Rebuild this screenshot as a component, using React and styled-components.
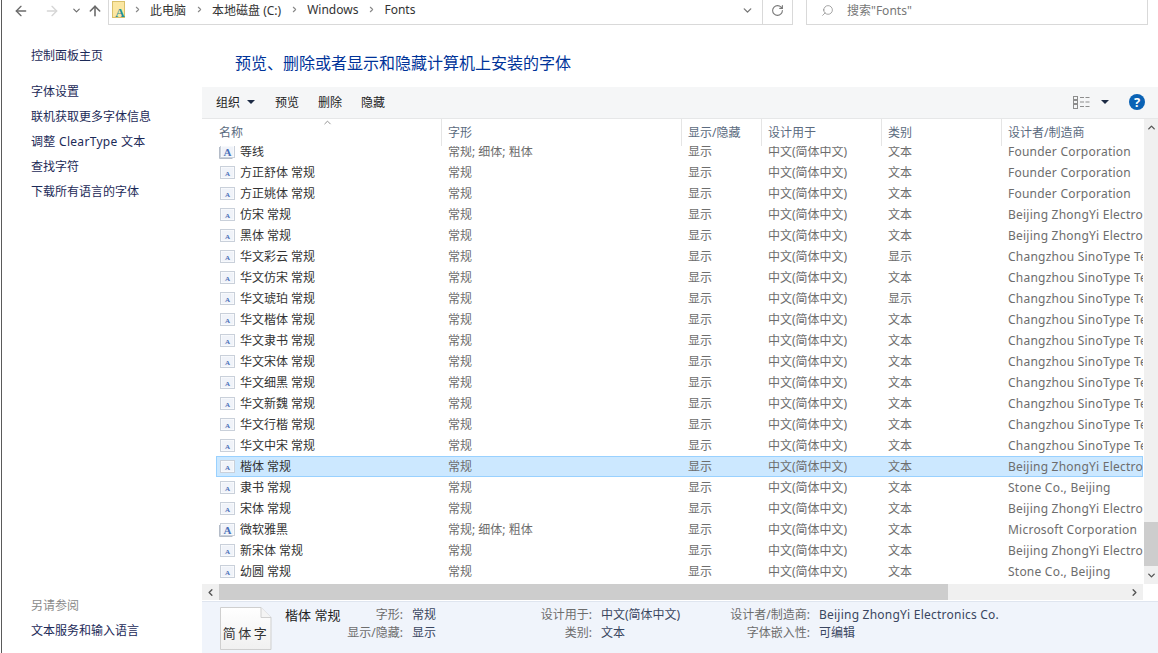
import { ArrowLeft, ArrowRight, ArrowUp, ChevronDown, ChevronLeft, ChevronRight, ChevronUp, RotateCw, Search } from "lucide-react";
import { createGlobalStyle, styled } from "styled-components";

// makers as far as the narrow last column shows them
const BEIJING = "Beijing ZhongYi Electro";
const FOUNDER = "Founder Corporation";
const SINOTYPE = "Changzhou SinoType Te";
const STONE = "Stone Co., Beijing";

const fonts = [
  { name: "等线", style: "常规; 细体; 粗体", maker: FOUNDER, family: true },
  { name: "方正舒体 常规", maker: FOUNDER },
  { name: "方正姚体 常规", maker: FOUNDER },
  { name: "仿宋 常规", maker: BEIJING },
  { name: "黑体 常规", maker: BEIJING },
  { name: "华文彩云 常规", maker: SINOTYPE, kind: "显示" },
  { name: "华文仿宋 常规", maker: SINOTYPE },
  { name: "华文琥珀 常规", maker: SINOTYPE, kind: "显示" },
  { name: "华文楷体 常规", maker: SINOTYPE },
  { name: "华文隶书 常规", maker: SINOTYPE },
  { name: "华文宋体 常规", maker: SINOTYPE },
  { name: "华文细黑 常规", maker: SINOTYPE },
  { name: "华文新魏 常规", maker: SINOTYPE },
  { name: "华文行楷 常规", maker: SINOTYPE },
  { name: "华文中宋 常规", maker: SINOTYPE },
  { name: "楷体 常规", maker: BEIJING, selected: true },
  { name: "隶书 常规", maker: STONE },
  { name: "宋体 常规", maker: BEIJING },
  { name: "微软雅黑", style: "常规; 细体; 粗体", maker: "Microsoft Corporation", family: true },
  { name: "新宋体 常规", maker: BEIJING },
  { name: "幼圆 常规", maker: STONE },
];

const columns = [
  { title: "名称", width: 226 },
  { title: "字形", width: 240 },
  { title: "显示/隐藏", width: 80 },
  { title: "设计用于", width: 120 },
  { title: "类别", width: 120 },
  { title: "设计者/制造商", width: 141 },
];

const GlobalStyle = createGlobalStyle`
  html, body {
    margin: 0;
    padding: 0;
    background: #fff;
  }
  body {
    font-family: "Noto Sans", "Noto Sans CJK SC", sans-serif;
    font-size: 12px;
  }
`;

const Window = styled.div`
  width: 1157px;
  height: 653px;
  margin-left: 1px;
  border-left: 1px solid #5a5a5a;
  box-sizing: border-box;
  display: flex;
  flex-direction: column;
  overflow: hidden;
`;

const AddressRow = styled.div`
  height: 26px;
  flex: none;
  display: flex;
  align-items: flex-start;
`;

const NavButtons = styled.div`
  width: 106px;
  height: 21px;
  display: flex;
  align-items: center;
  color: #5f5f5f;
`;

const NavIcon = styled.span`
  display: flex;
  margin-left: ${(p) => p.$left}px;
  color: ${(p) => (p.$off ? "#d5d5d5" : "#6b6b6b")};
`;

const AddressBox = styled.div`
  width: 685px;
  height: 25px;
  box-sizing: border-box;
  border: 1px solid #d9d9d9;
  border-top: none;
  display: flex;
  align-items: center;
`;

const Crumbs = styled.div`
  flex: 1;
  display: flex;
  align-items: center;
  gap: 10.5px;
  padding: 0 0 5px 3px;
  color: #333;
`;

const FolderMark = styled.span`
  display: flex;
  margin-right: -2px;
`;

const CrumbChevron = styled.span`
  display: flex;
  color: #888;
  margin: 0 -2px;
`;

const AddressEnd = styled.span`
  width: 30px;
  height: 100%;
  display: flex;
  align-items: center;
  justify-content: center;
  padding-bottom: 4px;
  box-sizing: border-box;
  color: #777;
  border-left: ${(p) => (p.$divider ? "1px solid #d9d9d9" : "none")};
`;

const SearchBox = styled.div`
  width: 342px;
  height: 25px;
  margin-left: 13px;
  box-sizing: border-box;
  border: 1px solid #d9d9d9;
  border-top: none;
  display: flex;
  align-items: center;
  gap: 13px;
  padding: 0 0 4px 14px;
  color: #777;
  svg {
    transform: scaleX(-1);
  }
`;

const Body = styled.div`
  flex: 1;
  min-height: 0;
  display: flex;
`;

const Sidebar = styled.nav`
  width: 200px;
  flex: none;
  display: flex;
  flex-direction: column;
  padding: 21px 0 6px 29px;
  box-sizing: border-box;
`;

const SideLink = styled.div`
  height: 25px;
  line-height: 18px;
  color: #1c2a58;
  margin-bottom: ${(p) => p.$gap || 0}px;
  letter-spacing: ${(p) => (p.$spaced ? "0.3px" : "0")};
`;

const SideHeading = styled.div`
  height: 25px;
  line-height: 18px;
  margin-top: auto;
  color: #8a8a8a;
`;

const Content = styled.main`
  flex: 1;
  min-width: 0;
  display: flex;
  flex-direction: column;
`;

const Title = styled.h1`
  height: 61px;
  flex: none;
  margin: 0;
  padding: 25px 0 0 33px;
  box-sizing: border-box;
  font-size: 16px;
  font-weight: 400;
  line-height: 24px;
  color: #003399;
`;

const Toolbar = styled.div`
  height: 32px;
  flex: none;
  box-sizing: border-box;
  background: #f5f6f7;
  border-bottom: 1px solid #e6e7e8;
  display: flex;
  align-items: center;
  padding: 0 13px 1px 14px;
  color: #222;
`;

const ToolButton = styled.span`
  display: flex;
  align-items: center;
  margin-right: ${(p) => p.$gap}px;
`;

const Caret = styled.span`
  width: 0;
  height: 0;
  margin-left: ${(p) => p.$left}px;
  border-left: 4px solid transparent;
  border-right: 4px solid transparent;
  border-top: 4px solid #1d2b45;
`;

const ToolbarEnd = styled.div`
  margin-left: auto;
  display: flex;
  align-items: center;
`;

const HelpBadge = styled.span`
  width: 16px;
  height: 16px;
  margin-left: 20px;
  border-radius: 50%;
  background: #0a62b5;
  color: #fff;
  font-size: 13px;
  font-weight: 700;
  line-height: 16px;
  text-align: center;
`;

const ListArea = styled.div`
  flex: 1;
  min-height: 0;
  display: flex;
`;

const ListColumn = styled.div`
  width: 941px;
  flex: none;
  display: flex;
  flex-direction: column;
`;

const List = styled.div`
  flex: 1;
  min-height: 0;
  padding-left: 14px;
  overflow: hidden;
`;

const Header = styled.div`
  height: 27px;
  display: flex;
  position: relative;
  z-index: 1;
  background: #fff;
  margin-bottom: -5px;
  color: #5b6b80;
`;

const HeaderCell = styled.div`
  width: ${(p) => p.$width}px;
  flex: none;
  box-sizing: border-box;
  padding: 5px 0 0 ${(p) => (p.$first ? 3 : 6)}px;
  line-height: 18px;
  border-right: ${(p) => (p.$last ? "none" : "1px solid #e5e5e5")};
`;

const SortMark = styled.span`
  position: absolute;
  left: 106px;
  top: -2px;
  display: flex;
  color: #8a8a8a;
`;

const Row = styled.div`
  height: 21px;
  display: flex;
  align-items: center;
  box-sizing: border-box;
  color: #6d6d6d;
  background: ${(p) => (p.$selected ? "#cce8ff" : "transparent")};
  box-shadow: ${(p) => (p.$selected ? "inset 0 0 0 1px #99d1ff" : "none")};
`;

const Cell = styled.div`
  width: ${(p) => p.$width}px;
  flex: none;
  box-sizing: border-box;
  padding-left: 7px;
  white-space: nowrap;
  overflow: hidden;
  line-height: 18px;
  letter-spacing: ${(p) => (p.$latin ? "0.23px" : "0")};
`;

const NameCell = styled(Cell)`
  display: flex;
  align-items: center;
  gap: 4px;
  padding-left: 3px;
  color: #333;
`;

const HScroll = styled.div`
  height: 16px;
  margin-bottom: 1px;
  flex: none;
  background: #f0f0f0;
  display: flex;
  align-items: center;
  color: #555;
`;

const ScrollEnd = styled.span`
  width: 17px;
  flex: none;
  display: flex;
  justify-content: center;
  margin-left: ${(p) => (p.$push ? "auto" : 0)};
`;

const HThumb = styled.div`
  width: 729px;
  height: 100%;
  background: #cdcdcd;
`;

const VScroll = styled.div`
  width: 14px;
  flex: none;
  margin-left: 1px;
  margin-bottom: 17px;
  background: #f0f0f0;
  display: flex;
  flex-direction: column;
  align-items: center;
  color: #555;
  position: relative;
`;

const VArrow = styled.span`
  height: 17px;
  display: flex;
  align-items: center;
  margin-top: ${(p) => (p.$push ? "auto" : 0)};
`;

const VThumb = styled.div`
  position: absolute;
  left: 0;
  right: 0;
  top: 403px;
  height: 44px;
  background: #cdcdcd;
`;

const Details = styled.footer`
  height: 52px;
  flex: none;
  border-top: 1px solid #dfe5ef;
  box-sizing: border-box;
  background: #f0f4fb;
  display: flex;
  align-items: flex-start;
  padding: 4px 0 0 18px;
  color: #6d6d6d;
`;

const Preview = styled.div`
  width: 52px;
  height: 43px;
  flex: none;
  position: relative;
  margin: 1px 13px 0 0;
`;

const PreviewText = styled.span`
  position: absolute;
  left: 0;
  right: 0;
  top: 17px;
  text-align: center;
  font-size: 13px;
  line-height: 18px;
  letter-spacing: 2.5px;
  color: #333;
`;

const FontName = styled.div`
  width: 60px;
  flex: none;
  font-size: 13px;
  line-height: 18px;
  color: #222;
`;

const Fields = styled.div`
  display: grid;
  grid-template-columns: ${(p) => p.$label}px ${(p) => p.$value}px;
  column-gap: 9px;
  grid-auto-rows: 18px;
  line-height: 18px;
`;

const FieldLabel = styled.span`
  text-align: right;
  white-space: nowrap;
  color: #6d6d6d;
`;

const FieldValue = styled.span`
  white-space: nowrap;
  color: #3a4660;
  letter-spacing: ${(p) => (p.$latin ? "0.23px" : "0")};
`;

function FontFileIcon({ family }) {
  return (
    <svg width="17" height="14" viewBox="0 0 17 14">
      {family && <path d="M0.5 2v11.5h13" fill="none" stroke="#b4bcc8" />}
      <rect x="1.5" y="0.5" width="14" height="12" fill="#fff" stroke="#c9d0da" />
      <rect x="2.5" y="1.5" width="12" height="10" fill="#f0f3f9" />
      <text
        x="8.5"
        y={family ? 10.5 : 9.5}
        textAnchor="middle"
        fontSize={family ? 11 : 7}
        fontWeight="700"
        fontFamily="Liberation Serif, serif"
        fill="#4a70b8"
      >
        A
      </text>
    </svg>
  );
}

function FolderIcon() {
  return (
    <svg width="14" height="18" viewBox="0 0 14 18">
      <rect x="0.5" y="0.5" width="12" height="16" fill="#fbe7a2" stroke="#d9c06a" />
      <text x="8" y="16" textAnchor="middle" fontSize="13" fontWeight="700" fontFamily="Liberation Serif, serif" fill="#1f8f9a">
        A
      </text>
    </svg>
  );
}

function ViewIcon() {
  return (
    <svg width="17" height="13" viewBox="0 0 17 13" fill="none" stroke="#8d8d8d">
      <rect x="0.5" y="0.5" width="4" height="3" />
      <rect x="0.5" y="4.5" width="4" height="3" />
      <rect x="0.5" y="8.5" width="4" height="4" />
      <path d="M7 1.5h4M12.5 1.5h4M7 6h4M12.5 6h4M7 10.5h4M12.5 10.5h4" />
    </svg>
  );
}

function PageShape() {
  return (
    <svg width="52" height="43" viewBox="0 0 52 43">
      <defs>
        <linearGradient id="page" x1="0" y1="0" x2="0" y2="1">
          <stop offset="0" stopColor="#ffffff" />
          <stop offset="1" stopColor="#f0f0f0" />
        </linearGradient>
      </defs>
      <path d="M0.5 0.5H41L51 10.5V42.5H0.5Z" fill="url(#page)" stroke="#cfcfcf" />
      <path d="M41 0.5V10.5H51" fill="#f4f4f4" stroke="#cfcfcf" />
    </svg>
  );
}

export default function App() {
  return (
    <Window>
      <GlobalStyle />
      <AddressRow>
        <NavButtons>
          <NavIcon $left={11}><ArrowLeft size={16} /></NavIcon>
          <NavIcon $left={15} $off><ArrowRight size={16} /></NavIcon>
          <NavIcon $left={11}><ChevronDown size={11} strokeWidth={2.5} /></NavIcon>
          <NavIcon $left={5}><ArrowUp size={16} strokeWidth={2.4} /></NavIcon>
        </NavButtons>
        <AddressBox>
          <Crumbs>
            <FolderMark><FolderIcon /></FolderMark>
            <CrumbChevron><ChevronRight size={9} strokeWidth={3} /></CrumbChevron>
            <span>此电脑</span>
            <CrumbChevron><ChevronRight size={9} strokeWidth={3} /></CrumbChevron>
            <span>本地磁盘 (C:)</span>
            <CrumbChevron><ChevronRight size={9} strokeWidth={3} /></CrumbChevron>
            <span>Windows</span>
            <CrumbChevron><ChevronRight size={9} strokeWidth={3} /></CrumbChevron>
            <span>Fonts</span>
          </Crumbs>
          <AddressEnd><ChevronDown size={13} strokeWidth={2.5} /></AddressEnd>
          <AddressEnd $divider><RotateCw size={13} strokeWidth={2} /></AddressEnd>
        </AddressBox>
        <SearchBox>
          <Search size={13} strokeWidth={1.2} />
          <span>搜索"Fonts"</span>
        </SearchBox>
      </AddressRow>
      <Body>
        <Sidebar>
          <SideLink $gap={11}>控制面板主页</SideLink>
          <SideLink>字体设置</SideLink>
          <SideLink>联机获取更多字体信息</SideLink>
          <SideLink $spaced>调整 ClearType 文本</SideLink>
          <SideLink>查找字符</SideLink>
          <SideLink>下载所有语言的字体</SideLink>
          <SideHeading>另请参阅</SideHeading>
          <SideLink>文本服务和输入语言</SideLink>
        </Sidebar>
        <Content>
          <Title>预览、删除或者显示和隐藏计算机上安装的字体</Title>
          <Toolbar>
            <ToolButton $gap={20}>组织<Caret $left={7} /></ToolButton>
            <ToolButton $gap={19}>预览</ToolButton>
            <ToolButton $gap={19}>删除</ToolButton>
            <ToolButton>隐藏</ToolButton>
            <ToolbarEnd>
              <ViewIcon />
              <Caret $left={11} />
              <HelpBadge>?</HelpBadge>
            </ToolbarEnd>
          </Toolbar>
          <ListArea>
            <ListColumn>
              <List>
                <Header>
                  <SortMark><ChevronUp size={11} /></SortMark>
                  {columns.map((col, i) => (
                    <HeaderCell key={col.title} $width={col.width} $first={i === 0} $last={i === columns.length - 1}>
                      {col.title}
                    </HeaderCell>
                  ))}
                </Header>
                {fonts.map((font) => (
                  <Row key={font.name} $selected={font.selected}>
                    <NameCell $width={225}>
                      <FontFileIcon family={font.family} />
                      {font.name}
                    </NameCell>
                    <Cell $width={240}>{font.style || "常规"}</Cell>
                    <Cell $width={80}>显示</Cell>
                    <Cell $width={120}>中文(简体中文)</Cell>
                    <Cell $width={120}>{font.kind || "文本"}</Cell>
                    <Cell $width={142} $latin>{font.maker}</Cell>
                  </Row>
                ))}
              </List>
              <HScroll>
                <ScrollEnd><ChevronLeft size={11} strokeWidth={3} /></ScrollEnd>
                <HThumb />
                <ScrollEnd $push><ChevronRight size={11} strokeWidth={3} /></ScrollEnd>
              </HScroll>
            </ListColumn>
            <VScroll>
              <VArrow><ChevronUp size={11} strokeWidth={3} /></VArrow>
              <VThumb />
              <VArrow $push><ChevronDown size={11} strokeWidth={3} /></VArrow>
            </VScroll>
          </ListArea>
          <Details>
            <Preview>
              <PageShape />
              <PreviewText>简体字</PreviewText>
            </Preview>
            <FontName>楷体 常规</FontName>
            <Fields $label={58} $value={128}>
              <FieldLabel>字形:</FieldLabel>
              <FieldValue>常规</FieldValue>
              <FieldLabel>显示/隐藏:</FieldLabel>
              <FieldValue>显示</FieldValue>
            </Fields>
            <Fields $label={52} $value={128}>
              <FieldLabel>设计用于:</FieldLabel>
              <FieldValue>中文(简体中文)</FieldValue>
              <FieldLabel>类别:</FieldLabel>
              <FieldValue>文本</FieldValue>
            </Fields>
            <Fields $label={81} $value={200}>
              <FieldLabel>设计者/制造商:</FieldLabel>
              <FieldValue $latin>Beijing ZhongYi Electronics Co.</FieldValue>
              <FieldLabel>字体嵌入性:</FieldLabel>
              <FieldValue>可编辑</FieldValue>
            </Fields>
          </Details>
        </Content>
      </Body>
    </Window>
  );
}
